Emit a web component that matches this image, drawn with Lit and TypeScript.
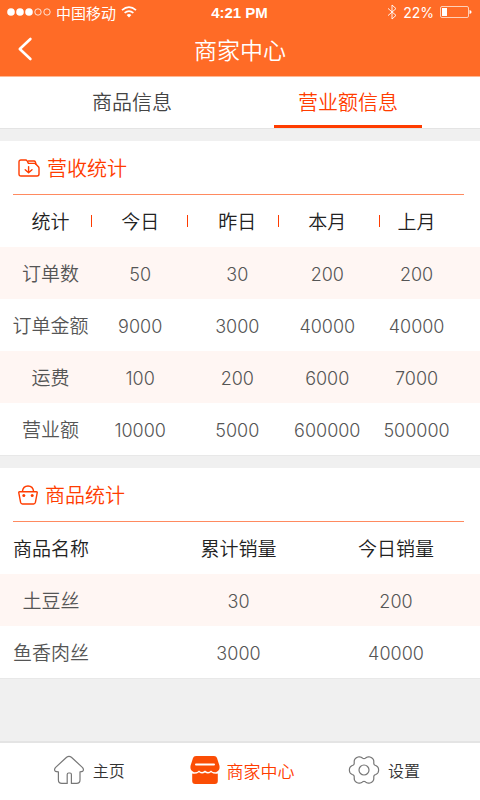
import { LitElement, html, css, svg } from "lit";
import { customElement, state } from "lit/decorators.js";
import { classMap } from "lit/directives/class-map.js";

const revenueHead = ["统计", "今日", "昨日", "本月", "上月"];
const revenueRows = [
  ["订单数", "50", "30", "200", "200"],
  ["订单金额", "9000", "3000", "40000", "40000"],
  ["运费", "100", "200", "6000", "7000"],
  ["营业额", "10000", "5000", "600000", "500000"],
];
const goodsHead = ["商品名称", "累计销量", "今日销量"];
const goodsRows = [
  ["土豆丝", "30", "200"],
  ["鱼香肉丝", "3000", "40000"],
];

const homeIcon = html`<svg class="nav-icon" width="32" height="30" viewBox="0 0 32 30" fill="none" stroke="#777" stroke-width="1.2" stroke-linejoin="round" aria-hidden="true">
  <path d="M13.6 2.2Q16 0.4 18.4 2.2L29.6 12.6Q31.4 15 29.4 16.4Q28.6 16.8 27 16.8V25Q27 28.4 23.6 28.4H18.4V19.6Q18.4 18 17 18H15.6Q14.2 18 14.2 19.6V28.4H8.8Q5.4 28.4 5.4 25V16.8Q3.4 16.8 2.6 16.4Q0.6 15 2.4 12.6Z"/>
</svg>`;

const shopIcon = html`<svg class="nav-icon" width="30" height="30" viewBox="0 0 30 30" aria-hidden="true">
  <path fill="#fb4d05" d="M6 1H24Q26.4 1 27 3L29.4 10.6Q30.4 15.6 26 17.2Q23 17.6 21 15.4Q18 18.4 15 15.6Q12 18.4 9 15.4Q7 17.6 4 17.2Q-.4 15.6.6 10.6L3 3Q3.6 1 6 1Z"/>
  <path fill="#fb4d05" d="M2.2 18.6Q6.2 19.4 9 17.2Q12 19.6 15 17.4Q18 19.6 21 17.2Q24 19.4 27.8 18.6V26Q27.8 29 24.8 29H5.2Q2.2 29 2.2 26Z"/>
  <path stroke="#fff" stroke-width="2" stroke-linecap="round" d="M6 9.5H24"/>
</svg>`;

/* Six rounded lobes with shallow hollows between them. */
function gearPath(): string {
  const points: string[] = [];
  for (let i = 0; i <= 120; i++) {
    const a = (i / 120) * Math.PI * 2;
    const r = 13.4 + 1.5 * Math.cos(6 * a) - 0.3 * Math.cos(12 * a);
    points.push(`${(16 + r * Math.cos(a)).toFixed(2)} ${(15 + r * Math.sin(a) * 0.98).toFixed(2)}`);
  }
  return `M${points.join("L")}Z`;
}

const gearIcon = html`<svg class="nav-icon" width="32" height="30" viewBox="0 0 32 30" fill="none" stroke="#777" stroke-width="1.2" stroke-linejoin="round" aria-hidden="true">
  <path d=${gearPath()}/><circle cx="16" cy="15" r="5"/>
</svg>`;

const folderIcon = html`<svg width="22" height="18" viewBox="0 0 22 18" fill="none" stroke="#ff3c00" stroke-width="1.4" stroke-linejoin="round" stroke-linecap="round" aria-hidden="true">
  <path d="M1 3Q1 1 3 1H7.6Q8.6 1 9.2 2L10.4 4.4H16.4Q17.4 4.4 18 5.2L20.6 8Q21 8.6 21 9.4V15Q21 17 19 17H3Q1 17 1 15Z"/>
  <path d="M10.4 2H16Q17 2 17.4 3L18 5.4"/>
  <path d="M10.6 7.6V13.4M7.2 10.8L10.6 13.8L14 10.8"/>
</svg>`;

const basketIcon = html`<svg width="20" height="20" viewBox="0 0 20 20" fill="none" stroke="#ff3c00" stroke-width="1.4" stroke-linejoin="round" aria-hidden="true">
  <path d="M1.6 6.8H18.4Q19.4 6.8 19.2 7.8L17.4 17.4Q17 19 15.6 19H4.4Q3 19 2.6 17.4L.8 7.8Q.6 6.8 1.6 6.8Z"/>
  <path d="M4.4 6.4Q5 1 10 1T15.6 6.4"/>
  <circle cx="5.8" cy="10.4" r="1.5" fill="#ff3c00" stroke="none"/>
  <circle cx="14.2" cy="10.4" r="1.5" fill="#ff3c00" stroke="none"/>
</svg>`;

@customElement("app-root")
export class AppRoot extends LitElement {
  @state() private tab = 1;

  static styles = css`
    :host {
      display: flex;
      flex-direction: column;
      min-height: 100vh;
      background: #f0f0f0;
      color: #444;
      font-family: Inter, "Noto Sans CJK SC", sans-serif;
      font-weight: 350;
      font-size: 18px;
    }
    button {
      border: 0;
      padding: 0;
      background: none;
      font: inherit;
      color: inherit;
      cursor: pointer;
    }
    h1, h2 { margin: 0; font-weight: inherit; }
    svg { display: block; flex: none; }

    .top { background: #ff6b26; color: #fff; border-bottom: 1px solid #ffb893; }
    .status {
      display: grid;
      grid-template-columns: 1fr auto 1fr;
      align-items: center;
      height: 24px;
      padding: 0 8px 0 7px;
      font-size: 14px;
      font-weight: 400;
    }
    .carrier, .power { display: flex; align-items: center; gap: 6px; }
    .carrier { font-size: 15px; gap: 5px; }
    .power { justify-content: flex-end; }
    .clock { font: bold 15px "Liberation Sans", sans-serif; }
    .titlebar {
      display: grid;
      grid-template-columns: 48px 1fr 48px;
      align-items: center;
      height: 50px;
      padding-bottom: 2px;
    }
    .back { display: flex; align-items: center; height: 48px; padding-left: 17px; }
    .title { font-size: 23px; text-align: center; }

    .tabs {
      display: flex;
      justify-content: center;
      gap: 14%;
      height: 51px;
      background: #fff;
      border-bottom: 1px solid #e4e4e4;
    }
    .tab {
      width: 31%;
      font-size: 20px;
      border-bottom: 3px solid transparent;
    }
    .tab.active { color: #ff3c00; border-bottom-color: #ff3c00; }

    .card { margin-top: 12px; background: #fff; border-bottom: 1px solid #e8e8e8; }
    .card-head {
      display: flex;
      align-items: center;
      gap: 7px;
      height: 53px;
      margin: 0 16px 0 13px;
      padding-left: 5px;
      border-bottom: 1px solid #ff8a60;
      color: #ff3c00;
    }
    .card-title { font-size: 20px; }

    table { width: 100%; border-collapse: collapse; table-layout: fixed; }
    th, td {
      box-sizing: border-box;
      height: 52px;
      padding: 3px 0 0;
      text-align: center;
      font-weight: inherit;
      white-space: nowrap;
      line-height: 24px;
    }
    th { position: relative; color: #222; }
    td { color: #555; }
    th, td:first-child { font-size: 19px; }
    tbody tr:nth-child(odd) { background: #fff6f3; }

    .revenue col:nth-child(1) { width: 19%; }
    .revenue col:nth-child(2) { width: 20%; }
    .revenue col:nth-child(3) { width: 19%; }
    .revenue col:nth-child(4) { width: 21%; }
    .revenue col:nth-child(5) { width: 21%; }
    .revenue tr > :nth-child(1) { padding-left: 10px; }
    .revenue tr > :nth-child(2) { padding-left: 2px; }
    .revenue tr > :nth-child(3) { padding-left: 9px; }
    .revenue tr > :nth-child(4) { padding-right: 3px; }
    .revenue tr > :nth-child(5) { padding-right: 26px; }
    .revenue th + th::before {
      content: "";
      position: absolute;
      left: 0;
      top: 20px;
      width: 1px;
      height: 12px;
      background: #ff3c00;
    }
    .goods tr > :nth-child(1) { padding-right: 58px; }
    .goods tr > :nth-child(2) { padding-right: 3px; }
    .goods tr > :nth-child(3) { padding-right: 8px; }

    .nav {
      display: grid;
      grid-template-columns: 37% 27% 32%;
      box-sizing: border-box;
      margin-top: auto;
      height: 59px;
      padding-bottom: 3px;
      background: #fff;
      border-top: 2px solid #e4e4e4;
    }
    .nav-link {
      display: flex;
      align-items: center;
      justify-content: center;
      gap: 8px;
      font-size: 16px;
      color: #333;
      text-decoration: none;
    }
    .nav-link.current { color: #ff3c00; gap: 6px; font-size: 17px; }
  `;

  private tabButton(label: string, index: number) {
    return html`<button role="tab" aria-selected=${this.tab === index}
      class=${classMap({ tab: true, active: this.tab === index })}
      @click=${() => (this.tab = index)}>${label}</button>`;
  }

  private table(name: string, head: string[], rows: string[][]) {
    return html`<table class=${name}>
      <colgroup>${head.map(() => html`<col>`)}</colgroup>
      <thead><tr>${head.map((h) => html`<th scope="col">${h}</th>`)}</tr></thead>
      <tbody>${rows.map((r) => html`<tr>${r.map((c) => html`<td>${c}</td>`)}</tr>`)}</tbody>
    </table>`;
  }

  render() {
    return html`
      <header class="top">
        <div class="status">
          <div class="carrier">
            <svg width="44" height="10" viewBox="0 0 44 10" fill="#fff" aria-hidden="true">
              ${[4, 13, 22].map((x) => svg`<circle cx=${x} cy="5" r="3.8"/>`)}
              ${[31, 40].map((x) => svg`<circle cx=${x} cy="5" r="3.2" fill="none" stroke="#fff" stroke-width="0.8"/>`)}
            </svg>
            <span>中国移动</span>
            <svg width="16" height="12" viewBox="0 0 16 12" fill="none" stroke="#fff" stroke-width="1.7" aria-hidden="true">
              <path d="M1 4.2Q8-2 15 4.2M3.6 6.9Q8 3.2 12.4 6.9"/>
              <path d="M5.6 9Q8 7 10.4 9L8 11.6Z" fill="#fff" stroke="none"/>
            </svg>
          </div>
          <span class="clock">4:21 PM</span>
          <div class="power">
            <svg width="10" height="16" viewBox="0 0 10 16" fill="none" stroke="#fff" stroke-width="0.9" aria-hidden="true">
              <path d="M1 4.4L9 11.4L5 15V1L9 4.6L1 11.6"/>
            </svg>
            <span>22%</span>
            <svg width="32" height="12" viewBox="0 0 32 12" aria-hidden="true">
              <rect x=".5" y=".5" width="28" height="11" rx="1.5" fill="none" stroke="#ffd0b8"/>
              <rect x="2" y="2" width="5" height="8" fill="#fff"/>
              <path d="M29.5 4Q31.6 4.4 31.6 6T29.5 8Z" fill="#fff"/>
            </svg>
          </div>
        </div>
        <div class="titlebar">
          <button class="back" aria-label="返回">
            <svg width="16" height="24" viewBox="0 0 16 24" fill="none" stroke="#fff" stroke-width="2.6" stroke-linecap="round" stroke-linejoin="round" aria-hidden="true">
              <path d="M13.4 2L2.8 12L13.4 22"/>
            </svg>
          </button>
          <h1 class="title">商家中心</h1>
        </div>
      </header>

      <div class="tabs" role="tablist">
        ${this.tabButton("商品信息", 0)}${this.tabButton("营业额信息", 1)}
      </div>

      <section class="card">
        <div class="card-head">${folderIcon}<h2 class="card-title">营收统计</h2></div>
        ${this.table("revenue", revenueHead, revenueRows)}
      </section>

      <section class="card">
        <div class="card-head">${basketIcon}<h2 class="card-title">商品统计</h2></div>
        ${this.table("goods", goodsHead, goodsRows)}
      </section>

      <nav class="nav">
        <a class="nav-link" href="#home">${homeIcon}主页</a>
        <a class="nav-link current" href="#shop" aria-current="page">${shopIcon}商家中心</a>
        <a class="nav-link" href="#settings">${gearIcon}设置</a>
      </nav>
    `;
  }
}
